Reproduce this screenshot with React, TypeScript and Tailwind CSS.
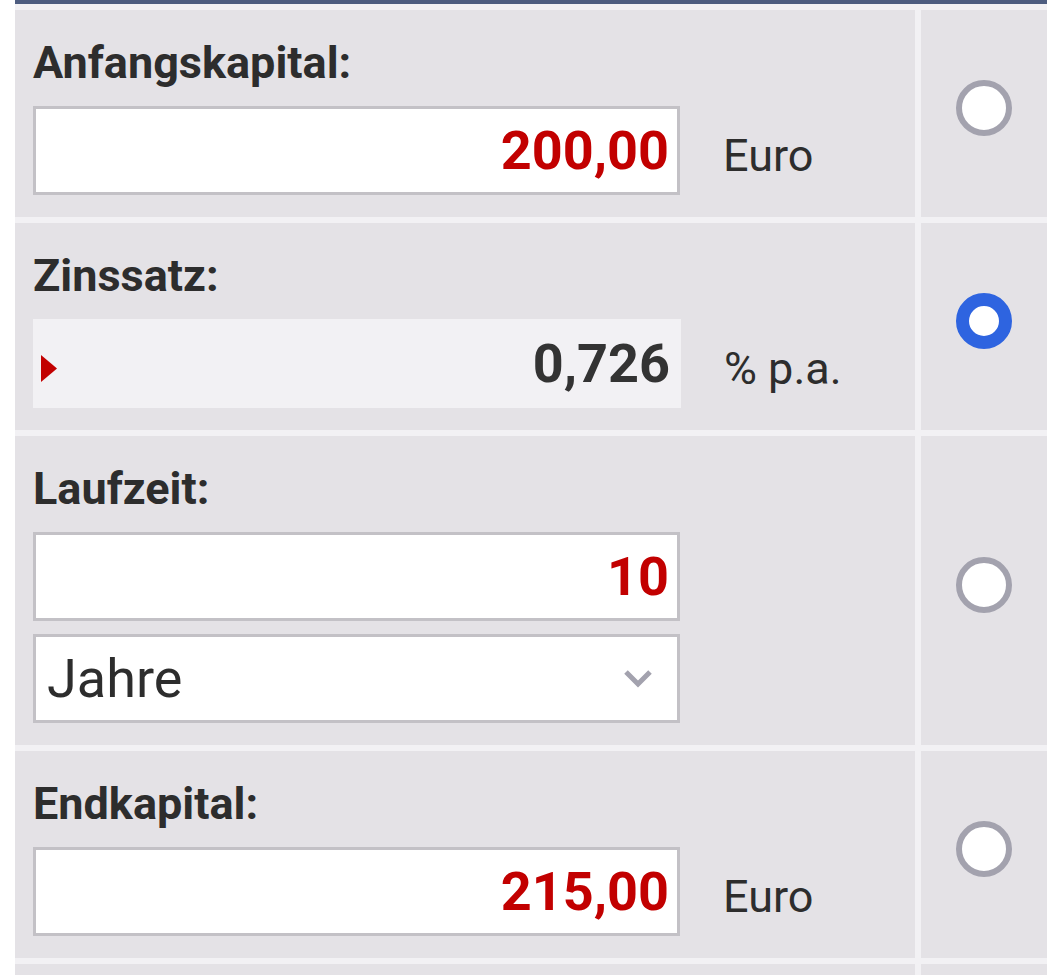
import React from 'react'

type FieldProps = {
  value: string
}

const Field = ({ value }: FieldProps) => (
  <div className="w-[647px] h-[89px] border-[3px] border-[#c3c1c6] bg-white flex items-center justify-end pr-[8px] text-[54px] font-bold text-[#c20000]">
    {value}
  </div>
)

const Radio = ({ checked }: { checked?: boolean }) => (
  <div
    className={
      checked
        ? 'w-[56px] h-[56px] rounded-full border-[13px] border-[#2e64e0] bg-white'
        : 'w-[56px] h-[56px] rounded-full border-[6px] border-[#a3a2ae] bg-white'
    }
  />
)

const Unit = ({ children }: { children: React.ReactNode }) => (
  <span className="ml-[43px] pt-[10px] text-[45px] text-[#2d2d2d]">{children}</span>
)

const Row = ({ label, checked, children }: { label: string; checked?: boolean; children: React.ReactNode }) => (
  <>
    <div className="bg-[#e4e2e6] pl-[18px] pt-[26px] pb-[22px]">
      <div className="text-[45px] leading-[54px] font-bold text-[#2d2d2d] mb-[16px]">{label}</div>
      {children}
    </div>
    <div className="bg-[#e4e2e6] flex items-center justify-center pb-[11px]">
      <Radio checked={checked} />
    </div>
  </>
)

export default function App() {
  return (
    <div className="min-h-screen bg-white font-['Roboto','Noto_Sans',sans-serif]">
      <div className="ml-[15px] w-[1032px] border-t-4 border-[#4e5d80] bg-[#f2f1f4] pt-[6px] grid grid-cols-[900px_126px] gap-[6px]">
        <Row label="Anfangskapital:">
          <div className="flex items-center">
            <Field value="200,00" />
            <Unit>Euro</Unit>
          </div>
        </Row>

        <Row label="Zinssatz:" checked>
          <div className="flex items-center">
            <div className="relative w-[648px] h-[89px] bg-[#f2f1f4] flex items-center justify-end pr-[11px] text-[54px] font-bold text-[#333333]">
              <svg className="absolute left-[8px] top-[36px]" width="16" height="27" viewBox="0 0 16 27">
                <polygon points="0,0 16,13.5 0,27" fill="#c20000" />
              </svg>
              0,726
            </div>
            <Unit>% p.a.</Unit>
          </div>
        </Row>

        <Row label="Laufzeit:">
          <Field value="10" />
          <div className="mt-[13px] w-[647px] h-[89px] border-[3px] border-[#c3c1c6] bg-white flex items-center justify-between pl-[11px] pr-[24px]">
            <span className="text-[54px] text-[#2d2d2d]">Jahre</span>
            <svg width="30" height="19" viewBox="0 0 30 19">
              <polyline points="3,3 15,15 27,3" fill="none" stroke="#a3a2ae" strokeWidth="5" />
            </svg>
          </div>
        </Row>

        <Row label="Endkapital:">
          <div className="flex items-center">
            <Field value="215,00" />
            <Unit>Euro</Unit>
          </div>
        </Row>

        <div className="bg-[#e4e2e6] h-[120px]" />
        <div className="bg-[#e4e2e6] h-[120px]" />
      </div>
    </div>
  )
}
